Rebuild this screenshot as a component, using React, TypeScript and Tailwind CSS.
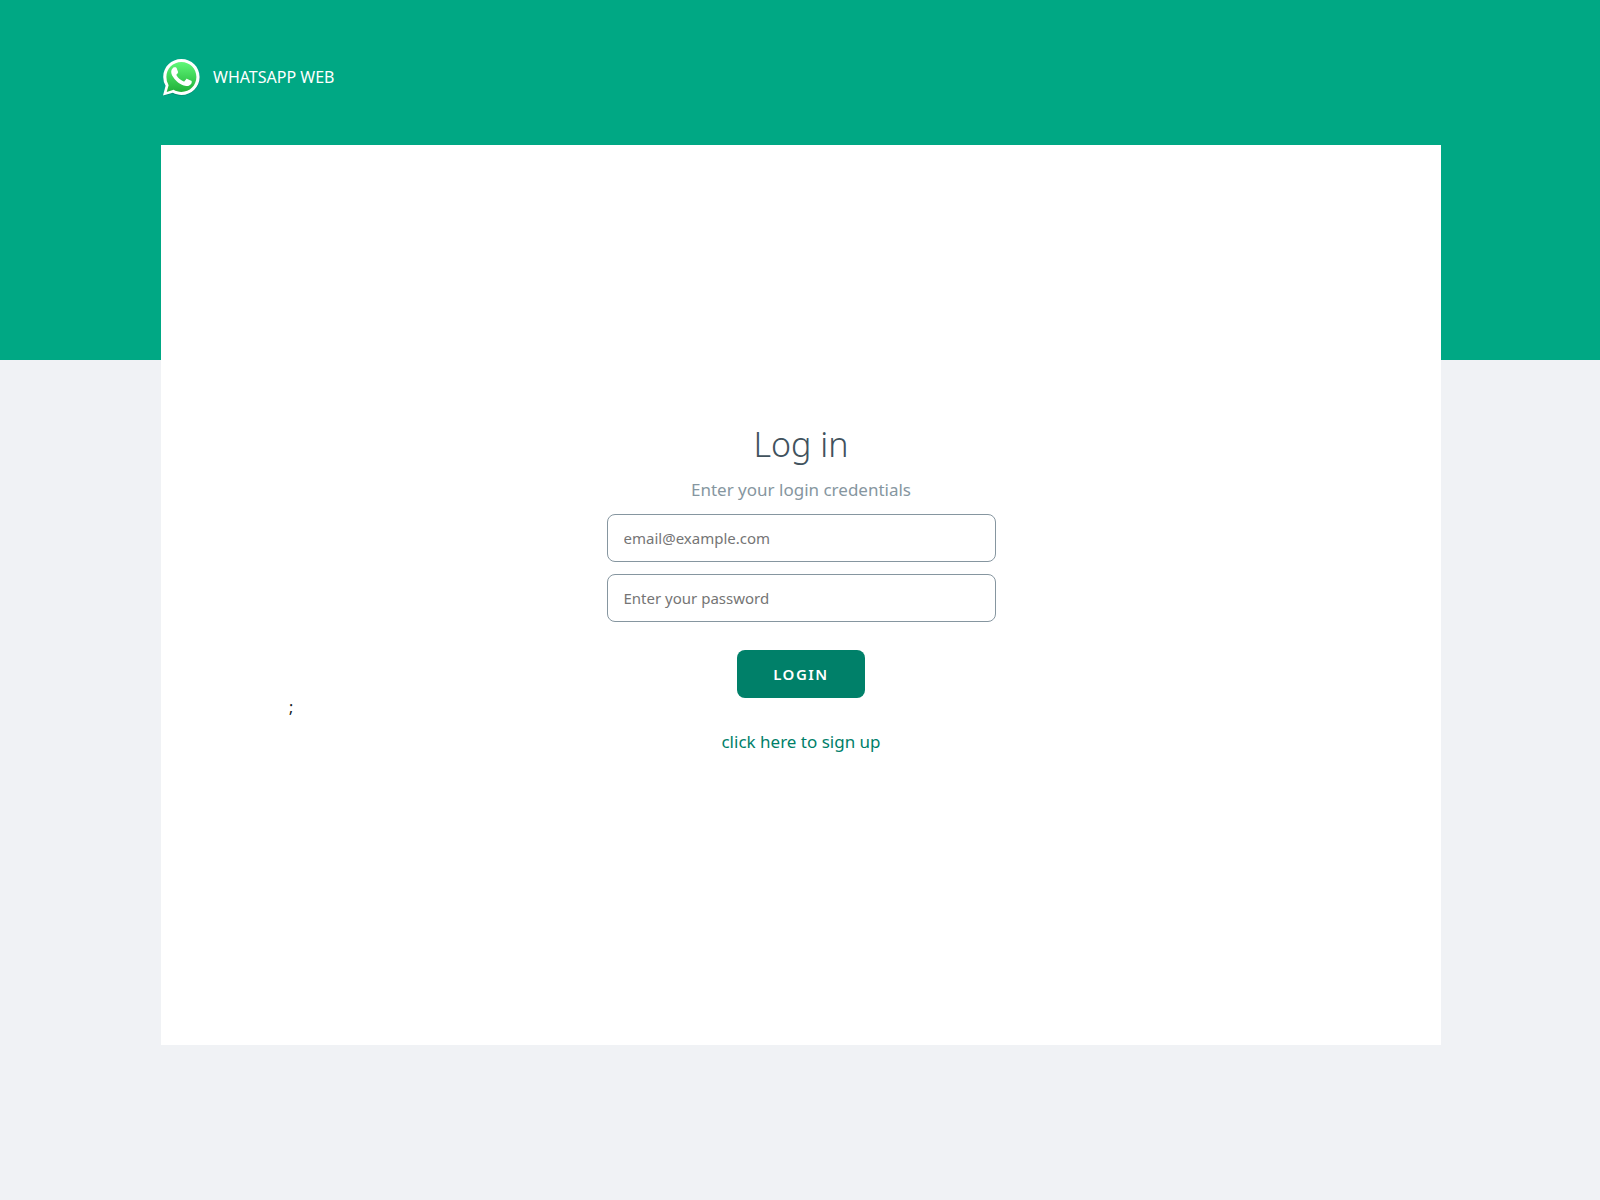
import { useState } from "react";

function Logo() {
  return (
    <svg viewBox="0 0 40 40" className="size-10" aria-hidden="true">
      <defs>
        <linearGradient id="bubble" x1="0" y1="0" x2="0" y2="1">
          <stop offset="0" stopColor="#60f878" />
          <stop offset="1" stopColor="#20b038" />
        </linearGradient>
      </defs>
      <path
        d="M2 38 4.600 28.600A17.900 17.900 0 0 1 2.200 19.800C2.200 10 10.200 2 20.300 2S38.800 10 38.800 19.800 30.500 37.800 20.300 37.800c-3 0-5.900-.7-8.500-2.100z"
        fill="#0b5a4a"
        opacity="0.3"
        transform="translate(0 1)"
      />
      <path
        d="M2 38.500 4.600 28.800A18.200 18.200 0 0 1 2.200 19.900C2.200 9.900 10.300 2 20.400 2S38.600 9.900 38.600 19.900 30.500 37.900 20.400 37.900c-3 0-5.900-.7-8.500-2.100z"
        fill="#fff"
      />
      <path
        d="M5.700 34.900 7.600 28.300A15 15 0 0 1 5.400 20C5.400 11.600 12.100 5 20.400 5s15 6.600 15 15-6.600 14.900-15 14.900c-2.800 0-5.500-.8-7.800-2.100z"
        fill="url(#bubble)"
      />
      <path
        d="M15.600 11.100c-.4-.9-.8-.9-1.200-.9h-1c-.4 0-.9.100-1.400.7-.5.500-1.800 1.700-1.800 4.200s1.800 4.800 2.100 5.200c.2.300 3.500 5.500 8.600 7.500 4.300 1.700 5.100 1.300 6.100 1.200.9-.1 3-1.200 3.400-2.400.4-1.200.4-2.200.3-2.400-.1-.200-.5-.3-1-.6-.5-.3-3-1.500-3.500-1.600-.4-.2-.8-.3-1.100.2-.3.500-1.300 1.600-1.600 2-.3.300-.6.400-1.100.1-.5-.200-2.100-.8-4.100-2.500-1.500-1.300-2.500-3-2.800-3.500-.3-.5 0-.8.200-1 .2-.2.500-.6.800-.9.200-.3.300-.5.500-.8.200-.4.100-.7 0-.9z"
        fill="#fff"
      />
    </svg>
  );
}

const field =
  "mt-3 h-12 w-full rounded-lg border border-[#8696a0] bg-white px-4 text-[15px] text-[#41525d] placeholder:text-[#757575]";

export default function App() {
  const [email, setEmail] = useState("");
  const [password, setPassword] = useState("");

  return (
    <div className="min-h-screen bg-[linear-gradient(#00a884_30vh,#f0f2f5_30vh)] bg-[#f0f2f5] pr-[159px] pl-[161px] font-['Noto_Sans',sans-serif] text-[#111b21]">
      <header className="flex items-center gap-3 pt-[57px] pb-12">
        <Logo />
        <span className="text-base text-white">WHATSAPP WEB</span>
      </header>
      <main className="grid min-h-[75vh] grid-cols-[1fr_389px_1fr] items-center bg-white">
        <span className="pt-56 pl-32 text-base">;</span>
        <form className="flex flex-col items-center pb-3" onSubmit={(e) => e.preventDefault()}>
          <h1 className="text-[34px] leading-10 font-light text-[#41525d]">Log in</h1>
          <p className="mt-3.5 text-[17px] leading-6 text-[#8696a0]">Enter your login credentials</p>
          <input
            type="email"
            aria-label="Email"
            placeholder="email@example.com"
            value={email}
            onChange={(e) => setEmail(e.target.value)}
            className={field}
          />
          <input
            type="password"
            aria-label="Password"
            placeholder="Enter your password"
            value={password}
            onChange={(e) => setPassword(e.target.value)}
            className={field}
          />
          <button
            type="submit"
            className="mt-7 h-12 rounded-lg bg-[#008069] px-9 text-[15px] font-semibold tracking-widest text-white"
          >
            LOGIN
          </button>
          <a href="#signup" className="mt-8 text-[17px] leading-6 text-[#008069]">
            click here to sign up
          </a>
        </form>
      </main>
    </div>
  );
}
